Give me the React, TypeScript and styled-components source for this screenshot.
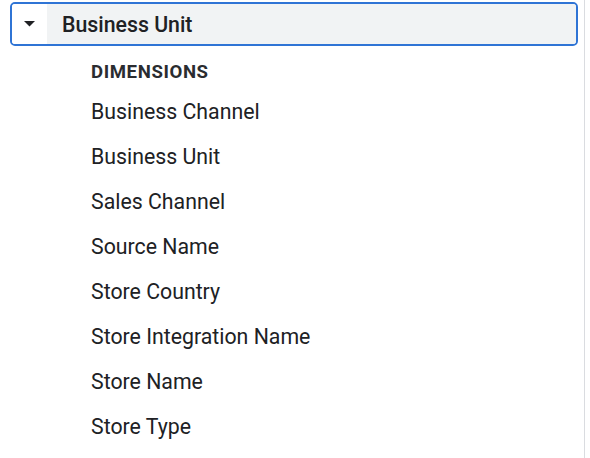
import React from 'react';
import styled, { createGlobalStyle } from 'styled-components';

const GlobalStyle = createGlobalStyle`
  body {
    margin: 0;
    background: #ffffff;
    font-family: Roboto, 'Liberation Sans', sans-serif;
    color: #202124;
  }
`;

const Panel = styled.div`
  width: 584px;
  height: 458px;
  border-right: 1px solid #dadce0;
  box-sizing: content-box;
  overflow: hidden;
`;

const Header = styled.div`
  display: flex;
  align-items: stretch;
  height: 40px;
  margin: 2px 6px 0 10px;
  border: 2px solid #2f74d5;
  border-radius: 5px;
  overflow: hidden;
`;

const Toggle = styled.div`
  width: 35px;
  display: flex;
  align-items: center;
  justify-content: center;
  background: #ffffff;
`;

const HeaderLabel = styled.div`
  flex: 1;
  display: flex;
  align-items: center;
  padding-left: 15px;
  background: #f1f3f4;
  font-size: 21.3px;
  font-weight: 500;
  color: #202124;
`;

const List = styled.div`
  display: flex;
  flex-direction: column;
  padding-left: 91px;
  padding-top: 11px;
`;

const SectionTitle = styled.div`
  height: 32px;
  line-height: 30px;
  font-size: 18.6px;
  font-weight: 700;
  letter-spacing: 0.6px;
  color: #2a2c30;
`;

const Item = styled.div`
  height: 45px;
  line-height: 45px;
  font-size: 21.3px;
  color: #202124;
`;

const items = [
  'Business Channel',
  'Business Unit',
  'Sales Channel',
  'Source Name',
  'Store Country',
  'Store Integration Name',
  'Store Name',
  'Store Type',
];

export default function App() {
  return (
    <>
      <GlobalStyle />
      <Panel>
        <Header>
          <Toggle>
            <svg width="12" height="6" viewBox="0 0 12 6">
              <path d="M0 0h11L5.5 5.5z" fill="#202124" />
            </svg>
          </Toggle>
          <HeaderLabel>Business Unit</HeaderLabel>
        </Header>
        <List>
          <SectionTitle>DIMENSIONS</SectionTitle>
          {items.map((name) => (
            <Item key={name}>{name}</Item>
          ))}
        </List>
      </Panel>
    </>
  );
}
